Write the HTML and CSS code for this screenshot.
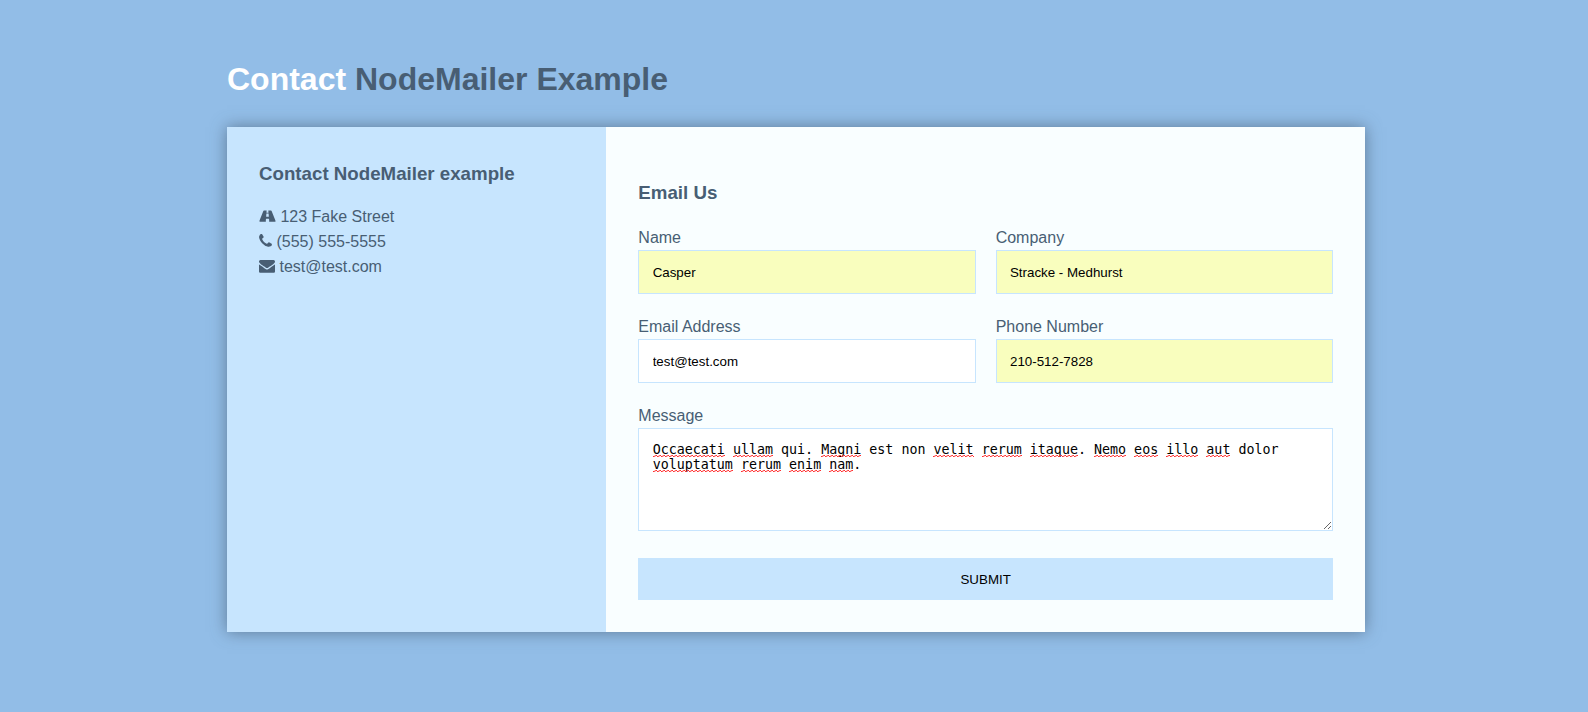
FILE: index.html
```html
<!DOCTYPE html>
<html lang="en">
<head>
<meta charset="utf-8">
<title>Contact NodeMailer Example</title>
<link rel="stylesheet" href="styles.css">
</head>
<body>
<div class="container">
  <h1 class="brand"><span>Contact</span> NodeMailer Example</h1>
  <div class="wrapper">
    <section class="company-info">
      <h3>Contact NodeMailer example</h3>
      <ul>
        <li><svg class="icon icon-road" viewBox="0 0 1920 1536" aria-hidden="true"><path d="M1111 832v-4l-24-320q-1-13-11-22.500t-23-9.500h-186q-13 0-23 9.500t-11 22.500l-24 320v4q-1 12 8 20t21 8h244q12 0 21-8t8-20zM1870 1345q0 63-40 63h-704q13 0 22-9.500t8-22.500l-20-256q-1-13-11-22.500t-23-9.500h-284q-13 0-23 9.500t-11 22.500l-20 256q-1 13 8 22.500t22 9.500h-704q-40 0-40-63 0-48 23-104l417-1044q8-19 26-33t38-14h339q-13 0-23 9.500t-11 22.500l-15 192q-1 14 8 23t22 9h166q13 0 22-9t8-23l-15-192q-1-13-11-22.500t-23-9.500h339q20 0 38 14t26 33l417 1044q23 56 23 104z"/></svg> 123 Fake Street</li>
        <li><svg class="icon icon-phone" viewBox="0 0 1408 1536" aria-hidden="true"><path d="M1408 1112q0 27-10 70.500t-21 68.500q-21 50-122 106-94 51-186 51-27 0-53-3.500t-57.500-12.500-47-14.500-55.500-20.500-49-18q-98-35-175-83-127-79-264-216t-216-264q-48-77-83-175-3-9-18-49t-20.500-55.500-14.500-47-12.500-57.500-3.500-53q0-92 51-186 56-101 106-122 25-11 68.500-21t70.500-10q14 0 21 3 18 6 53 76 11 19 30 54t35 63.500 31 53.500q3 4 17.500 25t21.500 35.500 7 28.500q0 20-28.500 50t-62 55-62 53-28.500 46q0 9 5 22.500t8.500 20.500 14 24 11.500 19q76 137 174 235t235 174q2 1 19 11.500t24 14 20.500 8.500 22.500 5q18 0 46-28.500t53-62 55-62 50-28.500q14 0 28.500 7t35.500 21.500 25 17.500q25 15 53.500 31t63.500 35 54 30q70 35 76 53 3 7 3 21z"/></svg> (555) 555-5555</li>
        <li><svg class="icon icon-mail" viewBox="0 0 1792 1536" aria-hidden="true"><path d="M1792 710v794q0 66-47 113t-113 47h-1472q-66 0-113-47t-47-113v-794q44 49 101 87 362 246 497 345 57 42 92.500 65.500t94.500 48 110 24.500h2q51 0 110-24.500t94.500-48 92.500-65.500q170-123 498-345 57-39 100-87zM1792 384q0 79-49 151t-122 123q-376 261-468 325-10 7-42.500 30.500t-54 38-52 32.500-57.500 27-50 9h-2q-23 0-50-9t-57.500-27-52-32.500-54-38-42.500-30.500q-91-64-262-182.500t-205-142.500q-62-42-117-115.500t-55-136.500q0-78 41.500-130t118.500-52h1472q65 0 112.500 47t47.500 113z" transform="translate(0 -128)"/></svg> test@test.com</li>
      </ul>
    </section>
    <section class="contact">
      <h3>Email Us</h3>
      <form>
        <p><label for="name">Name</label><input class="autofilled" type="text" id="name" name="name" value="Casper"></p>
        <p><label for="company">Company</label><input class="autofilled" type="text" id="company" name="company" value="Stracke - Medhurst"></p>
        <p><label for="email">Email Address</label><input type="email" id="email" name="email" value="test@test.com"></p>
        <p><label for="phone">Phone Number</label><input class="autofilled" type="text" id="phone" name="phone" value="210-512-7828"></p>
        <div class="full message">
          <label for="message">Message</label>
          <div class="editor">
            <textarea id="message" name="message" rows="5" spellcheck="false">Occaecati ullam qui. Magni est non velit rerum itaque. Nemo eos illo aut dolor voluptatum rerum enim nam.</textarea>
            <div class="spelling" aria-hidden="true">
              <div class="spelling-line"><i class="c9"></i><i class="c5"></i><b class="c4"></b><i class="c5"></i><b class="c3"></b><b class="c3"></b><i class="c5"></i><i class="c5"></i><i class="c6"></i><b class="c0"></b><i class="c4"></i><i class="c3"></i><i class="c4"></i><i class="c3"></i></div>
              <div class="spelling-line"><i class="c10"></i><i class="c5"></i><i class="c4"></i><i class="c3"></i></div>
            </div>
          </div>
        </div>
        <p class="full"><button type="submit">Submit</button></p>
      </form>
    </section>
  </div>
</div>
</body>
</html>
```
FILE: styles.css
```css
* { box-sizing: border-box; }

body {
  margin: 0;
  padding: 16px 16px 16px 20px;
  background: #92bde7;
  color: #485e74;
  font-family: "Liberation Sans", Arial, sans-serif;
  font-size: 16px;
  line-height: 25px;
}

.container {
  max-width: 1170px;
  margin: 0 auto;
  padding: 16px;
}

.brand {
  margin: 21px 0 22px;
  font-size: 32px;
  line-height: 52px;
}
.brand span { color: #fff; }

h3 {
  margin: 0;
  line-height: 30px;
}

.wrapper {
  display: grid;
  grid-template-columns: 1fr 2fr;
  box-shadow: 0 0 15px 0 rgba(72, 94, 116, 0.7);
}

.company-info {
  padding: 32px;
  background: #c7e5fe;
}
.company-info ul {
  margin: 15px 0 0;
  padding: 0;
  list-style: none;
}

.icon {
  height: 14px;
  fill: currentColor;
  vertical-align: -1px;
}
.icon-road { width: 17px; }
.icon-phone { width: 13px; }
.icon-mail { width: 16px; }

.contact {
  padding: 32px;
  background: #f9feff;
}
.contact h3 { margin: 19px 0 17px; }

form {
  display: grid;
  grid-template-columns: 1fr 1fr;
  gap: 20px;
}
form p { margin: 0; }
form label { display: block; }
.full { grid-column: 1 / 3; }
.message { margin-bottom: 7px; }

input,
textarea,
button {
  display: block;
  width: 100%;
  border: 1px solid #c7e5fe;
  border-radius: 0;
  padding: 13px 1em;
  background: #fff;
  color: #000;
}
input {
  height: 44px;
  font-family: "Liberation Sans", Arial, sans-serif;
}
.autofilled { background: #f9febe; }

.editor { position: relative; }
textarea {
  height: 103px;
  overflow: auto;
  font-family: "DejaVu Sans Mono", monospace;
  line-height: 15px;
}

/* Misspelling marks over the message, measured in characters. */
.spelling {
  position: absolute;
  top: 14px;
  left: 1px;
  padding-left: 1em;
  pointer-events: none;
  font: 13.3333px "DejaVu Sans Mono", monospace;
}
.spelling-line {
  display: flex;
  align-items: flex-end;
  gap: 1ch;
  height: 15px;
}
.spelling-line i {
  height: 2px;
  background: url("data:image/svg+xml,%3Csvg xmlns='http://www.w3.org/2000/svg' width='4' height='2'%3E%3Cpath d='M0 1.500L1 1.500L3 .5L4 .5' fill='none' stroke='%23ff3030'/%3E%3C/svg%3E") repeat-x;
}
.c0 { width: 0; }
.c3 { width: 3ch; }
.c4 { width: 4ch; }
.c5 { width: 5ch; }
.c6 { width: 6ch; }
.c9 { width: 9ch; }
.c10 { width: 10ch; }

button {
  height: 42px;
  border: 0;
  background: #c7e5fe;
  font-family: "Liberation Sans", Arial, sans-serif;
  text-transform: uppercase;
  cursor: pointer;
}
```
